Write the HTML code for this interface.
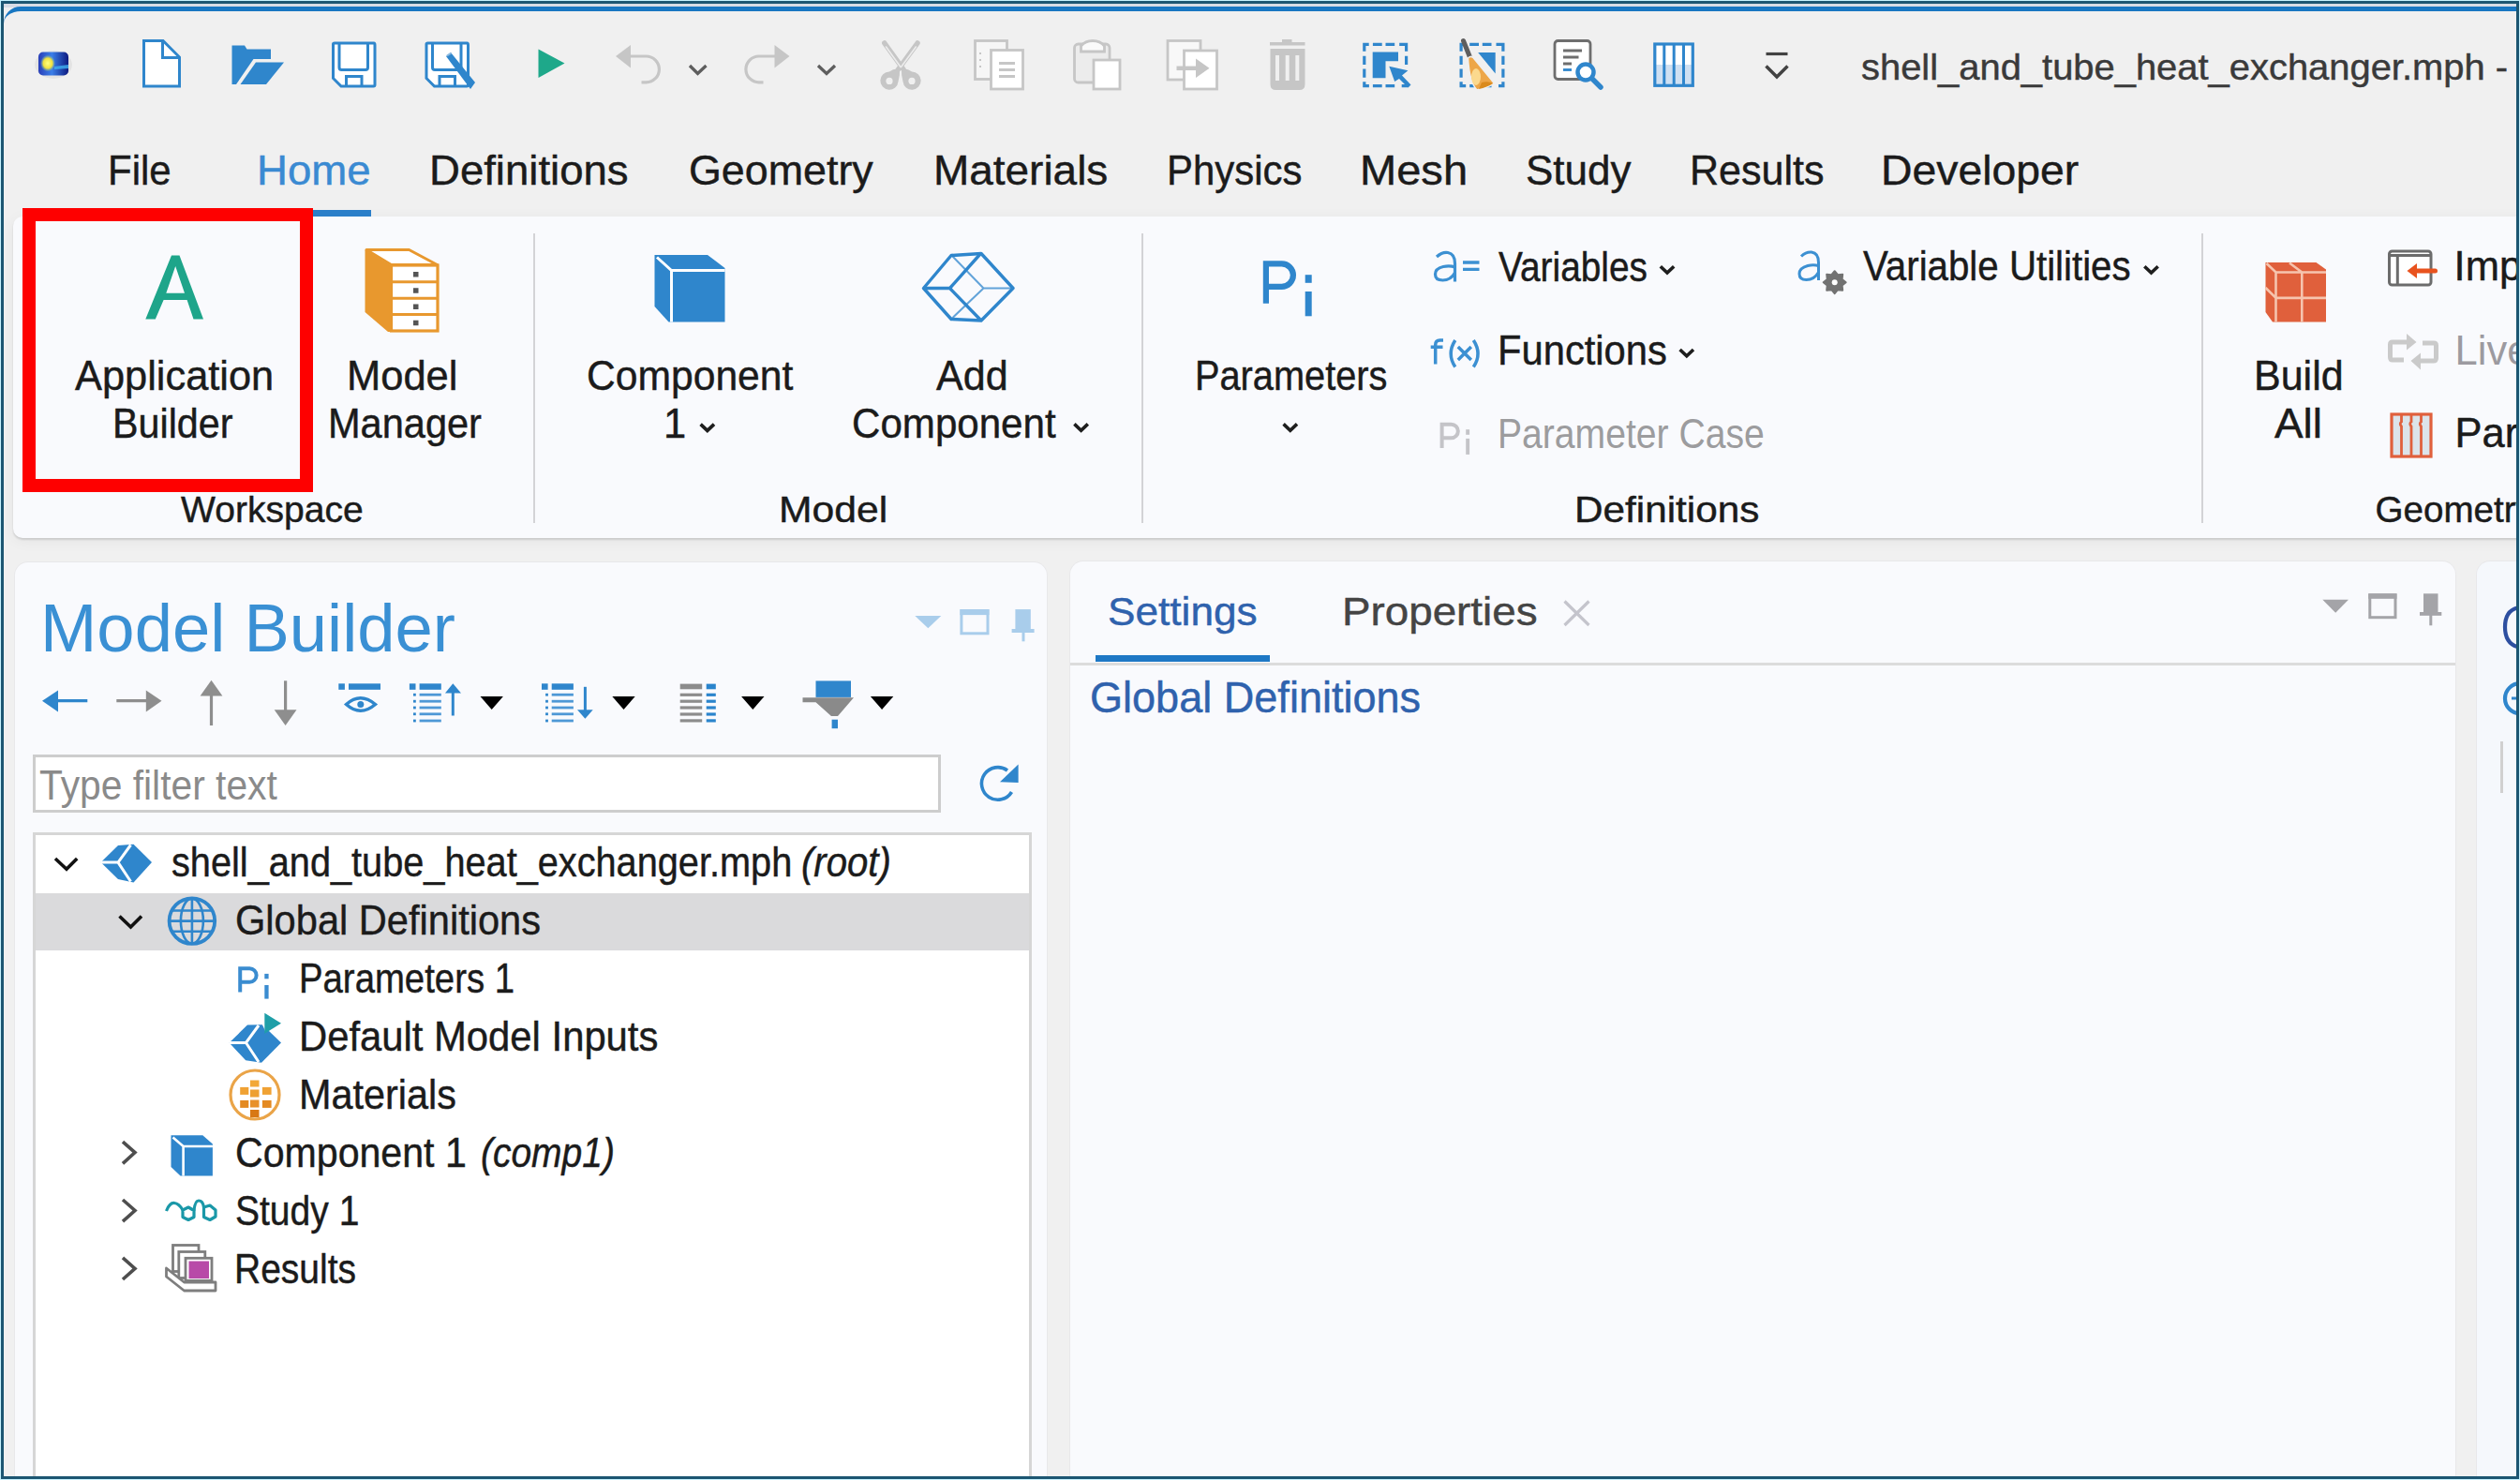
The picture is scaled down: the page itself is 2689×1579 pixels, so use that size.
<!DOCTYPE html>
<html><head><meta charset="utf-8"><title>COMSOL</title><style>
html,body{margin:0;padding:0}
body{width:2689px;height:1579px;position:relative;overflow:hidden;background:#c6f1fd;font-family:"Liberation Sans",sans-serif}
.t{position:absolute;white-space:pre;font-family:"Liberation Sans",sans-serif;-webkit-text-stroke:0.45px currentColor}
.a{position:absolute}
svg{position:absolute;overflow:visible}
</style></head><body>
<!-- window frame -->
<div class="a" style="left:1px;top:1px;width:2681px;height:1571px;border:3px solid #1c5672;background:#f0f0f0;border-radius:2px"></div>
<div class="a" style="left:4px;top:4px;width:2681px;height:4px;background:#d7dce5"></div>
<div class="a" style="left:4px;top:7px;width:2681px;height:20px;border-top:5px solid #1877c2;border-top-left-radius:18px;box-sizing:border-box"></div>
<!-- ribbon -->
<div class="a" style="left:13.5px;top:230.5px;width:2690px;height:343.5px;background:#f9fafd;border-radius:10px;box-shadow:0 2px 2px rgba(0,0,0,0.12),0 3px 16px rgba(0,0,0,0.05)"></div>
<!-- home underline -->
<div class="a" style="left:268px;top:224px;width:128px;height:7px;background:#2a7fc9"></div>
<!-- ribbon separators -->
<div class="a" style="left:568.5px;top:248.5px;width:2px;height:309px;background:#d3d3d6"></div>
<div class="a" style="left:1217.5px;top:248.5px;width:2px;height:309px;background:#d3d3d6"></div>
<div class="a" style="left:2348.5px;top:248.5px;width:2px;height:309px;background:#d3d3d6"></div>
<!-- panels -->
<div class="a" style="left:16px;top:599.5px;width:1101px;height:1100px;background:#f9fafd;border-radius:14px;box-shadow:0 0 0 1px #e8e8ea"></div>
<div class="a" style="left:1141.5px;top:599px;width:1478px;height:1100px;background:#f9fafd;border-radius:14px;box-shadow:0 0 0 1px #e8e8ea"></div>
<div class="a" style="left:2643px;top:599px;width:200px;height:1100px;background:#f5f8fc;border-radius:14px;box-shadow:0 0 0 1px #e8e8ea"></div>
<!-- filter box -->
<div class="a" style="left:35px;top:805px;width:962.5px;height:55.5px;border:3px solid #cdcdcd;background:#fff"></div>
<!-- tree box -->
<div class="a" style="left:35px;top:888px;width:1059.6px;height:800px;border:3px solid #d6d6d6;background:#fff"></div>
<div class="a" style="left:38px;top:952.5px;width:1059.6px;height:61px;background:#dadadc"></div>
<!-- settings tab strip -->
<div class="a" style="left:1141.5px;top:706.5px;width:1478px;height:3px;background:#dcdcdc"></div>
<div class="a" style="left:1169px;top:698.5px;width:186px;height:7px;background:#1e78c5"></div>
<!-- third panel divider -->
<div class="a" style="left:2668px;top:791px;width:3px;height:55px;background:#d0d0d0"></div>
<svg width="2689" height="1579" style="left:0;top:0"><defs>
<linearGradient id="lg1" x1="0" y1="0" x2="1" y2="0"><stop offset="0" stop-color="#2a3fb8"/><stop offset="0.45" stop-color="#3a7ee8"/><stop offset="1" stop-color="#0d1a80"/></linearGradient>
<radialGradient id="rg1" cx="0.5" cy="0.5" r="0.5"><stop offset="0" stop-color="#ffff80"/><stop offset="0.6" stop-color="#f0e040"/><stop offset="1" stop-color="#80c0a0" stop-opacity="0"/></radialGradient>
<linearGradient id="lg2" x1="0" y1="0" x2="0" y2="1"><stop offset="0" stop-color="#ffffff"/><stop offset="1" stop-color="#dceaf8"/></linearGradient>
</defs><ellipse cx="57" cy="69" rx="20" ry="15" fill="#000" opacity="0.05"/><rect x="41" y="55.5" width="32" height="25" rx="5" fill="url(#lg1)"/><ellipse cx="51" cy="67.5" rx="8" ry="9" fill="url(#rg1)"/><path d="M58,71 L73,69 L73,73 L58,74 Z" fill="#40b0f0" opacity="0.8"/><path d="M153.5,43.5 H174 L191.5,61 V92 H153.5 Z" fill="#fff" stroke="#2f86cc" stroke-width="3" stroke-linejoin="miter"/><path d="M173.5,43.5 V61.5 H191.5" fill="none" stroke="#2f86cc" stroke-width="3"/><path d="M247.5,48.5 H261 L263.5,52.5 H289 V63 H270.5 L252,90 H247.5 Z" fill="#2f86cc"/><path d="M273,66.5 H303 L284,90 H256.5 Z" fill="#2f86cc"/><path d="M355.5,47 Q355.5,46 357,46 H399 Q400,46 400,48 V90.5 Q400,92 398.5,92 H364 L355.5,83.5 Z" fill="#fff" stroke="#2f86cc" stroke-width="3"/><path d="M362,46 V72 Q362,74.5 364.5,74.5 H390 Q392.5,74.5 392.5,72 V46" fill="none" stroke="#2f86cc" stroke-width="3"/><path d="M369.5,92 V81.5 H386 V92" fill="none" stroke="#2f86cc" stroke-width="3"/><path d="M455.0,47 Q455.0,46 456.5,46 H498.5 Q499.5,46 499.5,48 V90.5 Q499.5,92 498.0,92 H463.5 L455.0,83.5 Z" fill="#fff" stroke="#2f86cc" stroke-width="3"/><path d="M461.5,46 V72 Q461.5,74.5 464.0,74.5 H489.5 Q492.0,74.5 492.0,72 V46" fill="none" stroke="#2f86cc" stroke-width="3"/><path d="M469.0,92 V81.5 H485.5 V92" fill="none" stroke="#2f86cc" stroke-width="3"/><path d="M476,60 L481,56 L507,88 L502,95 Z" fill="#2f86cc"/><path d="M477,59.5 L481.5,56.5" stroke="#8ab8e0" stroke-width="2"/><path d="M574.5,52.5 V83 L602.5,67.5 Z" fill="#1ea88a"/><path d="M657,60 L673,48 V72.5 Z" fill="#c6c6c6"/><path d="M672,60 H689.5 A13.9,13.9 0 0 1 689.5,87.8 H684.5" fill="none" stroke="#c6c6c6" stroke-width="3.2"/><path d="M736,70 L744.5,78.5 L753.5,70" fill="none" stroke="#5e5e5e" stroke-width="3.3"/><path d="M842.5,60 L826.5,48 V72.5 Z" fill="#c6c6c6"/><path d="M827,60 H809.8 A13.9,13.9 0 0 0 809.8,87.8 H814.5" fill="none" stroke="#c6c6c6" stroke-width="3.2"/><path d="M873,70 L882,78.5 L891,70" fill="none" stroke="#5e5e5e" stroke-width="3.3"/><g stroke-linecap="round" fill="none"><path d="M943.8,46 L964,74 M979,46 L958.5,74" stroke="#c6c6c6" stroke-width="5.5"/><path d="M945.5,50 L961,71.5 M977.3,50 L961.5,71.5" stroke="#ececec" stroke-width="1.6"/></g><path d="M948.9,76.5 Q955,72 960,74 Q960.5,80 958.5,87 A9.6,9.6 0 1 1 948.9,76.5 Z M973.1,76.5 Q967,72 962,74 Q961.5,80 963.5,87 A9.6,9.6 0 1 0 973.1,76.5 Z" fill="#c6c6c6"/><circle cx="949" cy="86.4" r="3.6" fill="#f0f0f0"/><circle cx="973" cy="86.4" r="3.6" fill="#f0f0f0"/><rect x="1040.5" y="43.5" width="34" height="41" fill="#f6f6f6" stroke="#c6c6c6" stroke-width="2.8"/><path d="M1045,57 h2 M1045,64 h2 M1045,71 h2" stroke="#c6c6c6" stroke-width="2"/><rect x="1057.5" y="53.5" width="34" height="41.5" fill="#fff" stroke="#c6c6c6" stroke-width="2.8"/><path d="M1066,67.5 H1083 M1066,74.5 H1083 M1066,81.5 H1083" stroke="#c6c6c6" stroke-width="2.8"/><rect x="1146.5" y="47" width="37.5" height="41" rx="4" fill="#ececec" stroke="#c6c6c6" stroke-width="2.8"/><path d="M1153.5,55 V49 Q1158,43.5 1166,43.5 Q1174,43.5 1178.5,49 V55 Z" fill="#fafafa" stroke="#c6c6c6" stroke-width="2.8"/><rect x="1167" y="64" width="28" height="31" fill="#fff" stroke="#c6c6c6" stroke-width="2.8"/><rect x="1246" y="43.5" width="35" height="41.5" fill="#f8f8f8" stroke="#c6c6c6" stroke-width="2.8"/><rect x="1263.5" y="54" width="35" height="41" fill="#fff" stroke="#c6c6c6" stroke-width="2.8"/><path d="M1255.5,72.8 H1278" stroke="#c6c6c6" stroke-width="4.5"/><path d="M1276,62.5 L1290.5,72.8 L1276,83 Z" fill="#c6c6c6"/><path d="M1355,45 H1392.5 V48.5 H1355 Z M1368,42 H1378.5 V45.5 H1368 Z" fill="#c6c6c6"/><path d="M1355.5,52 H1392.5 V90 Q1392.5,96 1386.5,96 H1361.5 Q1355.5,96 1355.5,90 Z" fill="#c6c6c6"/><path d="M1361,59 h4 v27 h-4 Z M1371.7,59 h4 v27 h-4 Z M1382.3,59 h4 v27 h-4 Z" fill="#f0f0f0"/><path d="M1455.8,54.75 V47.35 H1460.7 M1493.2,47.35 H1500.6000000000001 V54.75 M1455.8,87.25 V91.65 H1460.9 M1495.7,91.65 H1500.6000000000001 V87.25 M1464.9,47.35 H1474.7 M1464.9,91.65 H1474.7 M1478.5,47.35 H1488.2 M1478.5,91.65 H1488.2 M1455.8,59.75 V68.95 M1500.6000000000001,59.75 V68.95 M1455.8,73.55 V82.75" fill="none" stroke="#2f86cc" stroke-width="3.2"/><path d="M1464.7,55.4 H1492 V65.2 H1478.5 V83.2 H1464.7 Z" fill="#2f86cc"/><path d="M1482.3,70.7 L1502.4,75.3 L1496,80.5 L1505.5,90.5 L1502.5,93.5 L1493,84 L1488.2,87 Z" fill="#2f86cc" stroke="#f0f0f0" stroke-width="0"/><path d="M1559.1,54.75 V47.35 H1564.0 M1596.5,47.35 H1603.9 V54.75 M1559.1,87.25 V91.65 H1564.2 M1599.0,91.65 H1603.9 V87.25 M1568.2,47.35 H1578.0 M1568.2,91.65 H1578.0 M1581.8,47.35 H1591.5 M1581.8,91.65 H1591.5 M1559.1,59.75 V68.95 M1603.9,59.75 V68.95 M1559.1,73.55 V82.75 M1603.9,73.55 V82.75" fill="none" stroke="#2f86cc" stroke-width="3.2"/><path d="M1577.2,56 H1595.7 V78.6 Z" fill="#2f86cc"/><path d="M1561.5,43.5 L1568.5,61" stroke="#5e5e5e" stroke-width="5" stroke-linecap="round"/><path d="M1566.5,62 Q1569,59 1572,61.5 L1594.5,89 Q1586,94 1576,96 Q1568,88 1566.5,62 Z" fill="#eda648" stroke="#f0f0f0" stroke-width="1.5"/><ellipse cx="1575" cy="82" rx="5" ry="9" fill="#fbd98e"/><path d="M1581,88 Q1588,86 1593,89 Q1587,93 1578,95 Z" fill="#da8a1c"/><rect x="1659" y="43.5" width="38" height="41" rx="3.5" fill="#fff" stroke="#6e6e6e" stroke-width="2.8"/><path d="M1668,54 H1688 M1668,61 H1684.5 M1668,68 H1677" stroke="#6e6e6e" stroke-width="2.8"/><path d="M1668,74.5 H1677" stroke="#2f86cc" stroke-width="2.8"/><circle cx="1692" cy="77" r="8.5" fill="#fff" stroke="#2f86cc" stroke-width="4.5"/><path d="M1699,84 L1708,93" stroke="#2f86cc" stroke-width="5.5" stroke-linecap="round"/><rect x="1766" y="47" width="40.5" height="44" fill="#fff"/><rect x="1766" y="69" width="40.5" height="22" fill="#cfe0f2"/><rect x="1765.8" y="47" width="40.5" height="44.3" fill="none" stroke="#2f86cc" stroke-width="3.2"/><path d="M1775.8,47 V91 M1786.2,47 V91 M1796.5,47 V91" stroke="#2f86cc" stroke-width="3"/><path d="M1884.5,57.5 H1907.5" stroke="#424242" stroke-width="3.2"/><path d="M1884.5,70.5 L1896,82 L1907.5,70.5" fill="none" stroke="#424242" stroke-width="3.5"/><path fill-rule="evenodd" fill="#1ea58a" d="M183,272.5 H191.5 L217,340.5 H206.5 L199.6,320 H174.6 L165.8,340.5 H155.3 Z M187.2,284 L177.3,312.7 H197 Z"/><path d="M389.5,266.5 L417.5,283.5 V354 H414 L389.5,333 Z" fill="#e8982e"/><path d="M391,266.5 H436.5 L466.5,282.5 H417.5 Z" fill="#fff" stroke="#e8982e" stroke-width="3" stroke-linejoin="round"/><rect x="417.5" y="283" width="49.5" height="70" fill="#fff" stroke="#e8982e" stroke-width="3.2"/><path d="M417.5,300.8 H467 M417.5,318.2 H467 M417.5,335.6 H467" stroke="#e8982e" stroke-width="3"/><path d="M441,290 h5.5 v5.5 h-5.5 Z M441,307.3 h5.5 v5.5 h-5.5 Z M441,324.6 h5.5 v5.5 h-5.5 Z M441,341.8 h5.5 v5.5 h-5.5 Z" fill="#555"/><path d="M698.5,272 H755 L773.5,286 V343.5 H713.5 L698.5,327 Z" fill="#2f86cc"/><path d="M701,274.5 L716.5,288.5 H773.5 M716.5,288.5 V343.5" fill="none" stroke="#fff" stroke-width="3"/><g fill="none" stroke="#2f86cc" stroke-linejoin="round"><path d="M985.5,307.5 L1015,272.5 L1047,270.5 L1081,307.5 L1047,342 L1015,340.5 Z" stroke-width="3.4"/><path d="M985.5,307.5 H1013.5 L1046,271 M1013.5,307.5 L1046,341" stroke-width="3.4"/><path d="M1016,273 L1049.5,307.5 H1080 M1049.5,307.5 L1016,339.5" stroke-width="2" stroke-opacity="0.75"/></g><g fill="none" stroke="#2f86cc" stroke-width="6.2"><path d="M1350.9,323.8 V281.40000000000003 H1367.7 A12.2,12.2 0 0 1 1367.7,305.8 H1350.9"/></g><rect x="1392.7" y="293.2" width="7" height="8.6" fill="#2f86cc"/><rect x="1392.7" y="311" width="7" height="26.3" fill="#2f86cc"/><g fill="none" stroke="#3c90d2" stroke-width="3.2"><path d="M1533,274 Q1539,268.5 1545,269.5 Q1552.5,271 1552.5,281 V300.5"/><path d="M1552.5,285 Q1547,283 1540,284.5 Q1531.5,286.5 1531.5,292.5 Q1531.5,299 1539.5,299 Q1548,299 1552.5,291"/></g><path d="M1561,280 H1578.5 M1561,287.3 H1578.5" stroke="#3c90d2" stroke-width="3.3"/><g fill="none" stroke="#3c90d2" stroke-width="3.5"><path d="M1531.7,388.5 V368 Q1531.7,363 1536.5,363 H1540 M1526.7,370.2 H1539.5"/><path d="M1552.8,363 Q1543.5,377.5 1552.8,391.5"/><path d="M1555.8,370 L1569.8,384 M1569.8,370 L1555.8,384"/><path d="M1572.3,363 Q1581.8,377.5 1572.3,391.5"/></g><g fill="none" stroke="#c4c4c8" stroke-width="4.0"><path d="M1538.604,477.97499999999997 V452.747 H1548.6000000000001 A7.2589999999999995,7.2589999999999995 0 0 1 1548.6000000000001,467.265 H1538.604"/></g><rect x="1564.2" y="458.2" width="3.9" height="5.6" fill="#c4c4c8"/><rect x="1564.2" y="467.9" width="3.9" height="17" fill="#c4c4c8"/><g fill="none" stroke="#3c90d2" stroke-width="3"><path d="M1922,273.5 Q1927,268.5 1933,269 Q1940.5,270 1940.5,280 V299"/><path d="M1940.5,283.5 Q1935,282 1929,283.5 Q1920,286 1920,292 Q1920,298.5 1927.5,298.5 Q1936,298.5 1940.5,290.5"/></g><path d="M1957.70,289.20 L1960.99,293.25 L1966.19,292.71 L1965.65,297.91 L1969.70,301.20 L1965.65,304.49 L1966.19,309.69 L1960.99,309.15 L1957.70,313.20 L1954.41,309.15 L1949.21,309.69 L1949.75,304.49 L1945.70,301.20 L1949.75,297.91 L1949.21,292.71 L1954.41,293.25 Z" fill="#727272" stroke="#727272" stroke-width="2" stroke-linejoin="round"/><circle cx="1957.7" cy="301.2" r="3" fill="#fff"/><path d="M2417.5,280 H2471.5 L2482,287.5 V343.5 H2425 L2417.5,333 Z" fill="#e0603c"/><path d="M2418.5,281 L2428.5,290.5 H2482 M2428.5,290.5 V343.5 M2456.3,290.5 V343.5 M2428.5,317.9 H2482 M2417.5,307 L2428.5,317.9 M2443,280.5 L2456.3,290.5" fill="none" stroke="#f6c4ae" stroke-width="2.6"/><rect x="2549.5" y="268" width="44.5" height="36" rx="3" fill="#fff" stroke="#6c6c6c" stroke-width="3"/><path d="M2549.5,272.5 H2594" stroke="#6c6c6c" stroke-width="3"/><path d="M2558.3,272 V304" stroke="#6c6c6c" stroke-width="3"/><path d="M2576,289 H2598.5" stroke="#e8521e" stroke-width="5" stroke-linecap="round"/><path d="M2568.5,289 L2579,281 V297 Z" fill="#e8521e"/><g fill="none" stroke="#cacaca" stroke-width="5"><path d="M2571,365 H2553 Q2550.5,365 2550.5,367.5 V381 Q2550.5,384 2553,384 H2565"/><path d="M2578,385 H2596.5 Q2599.5,385 2599.5,382 V368.5 Q2599.5,366 2597,366 H2585"/></g><path d="M2568,356 L2578.5,365 L2568,373.5 Z M2583,376.5 L2572.5,385 L2583,394.5 Z" fill="#cacaca"/><rect x="2552" y="442" width="42" height="45" fill="#dce4ea" stroke="#e0603c" stroke-width="3.2"/><g fill="none" stroke="#e0603c" stroke-width="2.8"><path d="M2562.5,442 V450 Q2560,452 2562.5,455 V487"/><path d="M2573,442 V450 Q2570.5,452 2573,455 V487"/><path d="M2583.5,442 V450 Q2581,452 2583.5,455 V487"/></g><path d="M747.5999999999999,452.6 L754.8,459.40000000000003 L762.0,452.6" fill="none" stroke="#1e1e1e" stroke-width="3.6"/><path d="M1146.3999999999999,452.4 L1153.6,459.2 L1160.8,452.4" fill="none" stroke="#1e1e1e" stroke-width="3.6"/><path d="M1369.6,452.4 L1376.8,459.2 L1384.0,452.4" fill="none" stroke="#1e1e1e" stroke-width="3.6"/><path d="M1771.8,284.3 L1779,291.1 L1786.2,284.3" fill="none" stroke="#1e1e1e" stroke-width="3.6"/><path d="M1792.6,373 L1799.8,379.8 L1807.0,373" fill="none" stroke="#1e1e1e" stroke-width="3.6"/><path d="M2288.3,284.3 L2295.5,291.1 L2302.7,284.3" fill="none" stroke="#1e1e1e" stroke-width="3.6"/><path d="M45,747.7 L62,736.4 V759.4 Z" fill="#2f86cc"/><path d="M60,747.7 H93.3" stroke="#2f86cc" stroke-width="3.2"/><path d="M172.5,747.7 L155.8,736.4 V759.4 Z" fill="#8e8e8e"/><path d="M124.3,747.7 H158" stroke="#8e8e8e" stroke-width="3.2"/><path d="M225.5,725.7 L213.6,742.4 H237.4 Z" fill="#8e8e8e"/><path d="M225.5,740 V774" stroke="#8e8e8e" stroke-width="3.2"/><path d="M304.6,773.9 L292.7,757.3 H316.5 Z" fill="#8e8e8e"/><path d="M304.6,726.3 V760" stroke="#8e8e8e" stroke-width="3.2"/><rect x="361.3" y="729.3" width="6.6" height="6.5" fill="#2f86cc"/><rect x="372" y="729.3" width="34" height="6.5" fill="#2f86cc"/><path d="M369.5,751.5 Q384.5,738 400.5,751.5 Q384.5,765 369.5,751.5 Z" fill="none" stroke="#2f86cc" stroke-width="3.4"/><circle cx="384.8" cy="751.5" r="3.5" fill="#2f86cc"/><rect x="436.9" y="729.3" width="6.6" height="6.5" fill="#2f86cc"/><rect x="447.59999999999997" y="729.3" width="23.2" height="6.5" fill="#2f86cc"/><rect x="441.0" y="739.8000000000001" width="2.8" height="2.8" fill="#2f86cc"/><rect x="447.59999999999997" y="739.8000000000001" width="23.2" height="2.8" fill="#4e98d6"/><rect x="441.0" y="746.8000000000001" width="2.8" height="2.8" fill="#2f86cc"/><rect x="447.59999999999997" y="746.8000000000001" width="23.2" height="2.8" fill="#4e98d6"/><rect x="441.0" y="753.6" width="2.8" height="2.8" fill="#2f86cc"/><rect x="447.59999999999997" y="753.6" width="23.2" height="2.8" fill="#4e98d6"/><rect x="441.0" y="760.4" width="2.8" height="2.8" fill="#2f86cc"/><rect x="447.59999999999997" y="760.4" width="23.2" height="2.8" fill="#4e98d6"/><rect x="441.0" y="767.6" width="2.8" height="2.8" fill="#2f86cc"/><rect x="447.59999999999997" y="767.6" width="23.2" height="2.8" fill="#4e98d6"/><path d="M483.3,729.3 L475,739.6 H492 Z" fill="#2f86cc"/><path d="M483.3,737 V763.5" stroke="#2f86cc" stroke-width="3"/><rect x="578" y="729.3" width="6.6" height="6.5" fill="#2f86cc"/><rect x="588.7" y="729.3" width="23.2" height="6.5" fill="#2f86cc"/><rect x="582.1" y="739.8000000000001" width="2.8" height="2.8" fill="#2f86cc"/><rect x="588.7" y="739.8000000000001" width="23.2" height="2.8" fill="#4e98d6"/><rect x="582.1" y="746.8000000000001" width="2.8" height="2.8" fill="#2f86cc"/><rect x="588.7" y="746.8000000000001" width="23.2" height="2.8" fill="#4e98d6"/><rect x="582.1" y="753.6" width="2.8" height="2.8" fill="#2f86cc"/><rect x="588.7" y="753.6" width="23.2" height="2.8" fill="#4e98d6"/><rect x="582.1" y="760.4" width="2.8" height="2.8" fill="#2f86cc"/><rect x="588.7" y="760.4" width="23.2" height="2.8" fill="#4e98d6"/><rect x="582.1" y="767.6" width="2.8" height="2.8" fill="#2f86cc"/><rect x="588.7" y="767.6" width="23.2" height="2.8" fill="#4e98d6"/><path d="M624.4,766.8 L616,757.3 H632.7 Z" fill="#2f86cc"/><path d="M624.4,732.8 V759" stroke="#2f86cc" stroke-width="3"/><rect x="725.7" y="729.6" width="23.5" height="5.7" fill="#8c8c8c"/><rect x="753.7" y="729.6" width="10.1" height="5.7" fill="#2a84cc"/><rect x="725.7" y="739.6999999999999" width="23.5" height="3.2" fill="#8c8c8c"/><rect x="753.7" y="739.6999999999999" width="10.1" height="3.2" fill="#2a84cc"/><rect x="725.7" y="746.6" width="23.5" height="3.2" fill="#8c8c8c"/><rect x="753.7" y="746.6" width="10.1" height="3.2" fill="#2a84cc"/><rect x="725.7" y="753.4" width="23.5" height="3.2" fill="#8c8c8c"/><rect x="753.7" y="753.4" width="10.1" height="3.2" fill="#2a84cc"/><rect x="725.7" y="760.4" width="23.5" height="3.2" fill="#8c8c8c"/><rect x="753.7" y="760.4" width="10.1" height="3.2" fill="#2a84cc"/><rect x="725.7" y="767.3" width="23.5" height="3.2" fill="#8c8c8c"/><rect x="753.7" y="767.3" width="10.1" height="3.2" fill="#2a84cc"/><rect x="870.5" y="726.4" width="37.5" height="17.5" fill="#2f86cc"/><path d="M856.5,744.2 H911 L894,764 H887 L870.5,749.3 H856.5 Z" fill="#8a8a8a"/><rect x="887.6" y="767.7" width="6.4" height="9.5" fill="#2f86cc"/><path d="M512.5,743 H536.9 L524.7,756.9 Z" fill="#000"/><path d="M653.3,743 H677.6999999999999 L665.5,756.9 Z" fill="#000"/><path d="M791.1,743 H815.5 L803.3000000000001,756.9 Z" fill="#000"/><path d="M928.9,743 H953.3 L941.1,756.9 Z" fill="#000"/><path d="M976.3,657.1 H1004.3 L990.3,670.3 Z" fill="#a9cdeb"/><rect x="1025.9" y="651.6" width="28.1" height="24.2" fill="none" stroke="#a9cdeb" stroke-width="3"/><rect x="1024.4" y="650.1" width="31.1" height="6" fill="#a9cdeb"/><rect x="1083.4" y="650.1" width="16.4" height="21.7" fill="#a9cdeb"/><rect x="1079.6" y="671" width="24" height="4" fill="#a9cdeb"/><rect x="1090.5" y="674" width="3" height="10.3" fill="#a9cdeb"/><path d="M1079.5,845 A17.3,17.3 0 1 1 1075,822" fill="none" stroke="#2f86cc" stroke-width="3.6"/><path d="M1067,834.2 L1086.6,815.5 V834.9 Z" fill="#2f86cc"/><path d="M59,916 L71,927.2 L82.2,916" fill="none" stroke="#111" stroke-width="3.6"/><path d="M127.5,977.5 L139.5,989 L151,977.5" fill="none" stroke="#111" stroke-width="3.6"/><path d="M131,1218.1 L144,1229.6 L131,1241.3" fill="none" stroke="#4e4e4e" stroke-width="3.6"/><path d="M131,1280 L144,1291.5 L131,1303.1" fill="none" stroke="#4e4e4e" stroke-width="3.6"/><path d="M131,1341.9 L144,1353.4 L131,1365" fill="none" stroke="#4e4e4e" stroke-width="3.6"/><path d="M107.6,920.1 L126,902 L142.5,900.7 L162,920.1 L142.5,941.6 L126,938 Z" fill="#2f86cc"/><path d="M107.6,920.1 H126 L139.5,901.5 M126,920.1 L139.5,940.5" fill="none" stroke="#fff" stroke-width="3"/><g fill="none" stroke="#2f86cc" stroke-width="2.6"><circle cx="204.9" cy="982.6" r="24.3" stroke-width="3.8"/><ellipse cx="204.9" cy="982.6" rx="12" ry="24"/><path d="M204.9,958.4 V1006.8 M180.7,982.6 H229.1 M183.5,971.5 H226.3 M183.5,993.7 H226.3"/></g><g fill="none" stroke="#3a8cd0" stroke-width="4.0"><path d="M256.22,1058.6 V1033.1599999999999 H266.3 A7.319999999999999,7.319999999999999 0 0 1 266.3,1047.8 H256.22"/></g><rect x="282.3" y="1038.9" width="4.3" height="5.4" fill="#3a8cd0"/><rect x="282.3" y="1051" width="4.3" height="14.6" fill="#3a8cd0"/><path d="M244.6,1112.5 L264,1093.6 L280,1093.2 L300,1112.5 L279,1133.7 L262.2,1131.3 Z" fill="#2f86cc"/><path d="M244.6,1112.5 H262.5 L276,1094 M262.5,1112.5 L276,1133" fill="none" stroke="#fff" stroke-width="3"/><path d="M279,1091 L283,1100 L292,1093 Z" fill="#fff"/><path d="M282.3,1080.8 V1102.7 L300,1091.8 Z" fill="#1f9fa8"/><circle cx="272" cy="1168" r="26" fill="none" stroke="#eaa448" stroke-width="3.2"/><rect x="256.2" y="1159.9" width="9.100000000000023" height="8" fill="#f0a234"/><rect x="256.2" y="1173.9" width="9.100000000000023" height="8" fill="#e48a22"/><rect x="279.9" y="1159.9" width="9.700000000000045" height="8" fill="#f0a234"/><rect x="279.9" y="1173.9" width="9.700000000000045" height="8" fill="#e48a22"/><rect x="267" y="1152.5" width="9.5" height="7" fill="#f2a838"/><rect x="267" y="1162.5" width="9.5" height="8" fill="#eea032"/><rect x="267" y="1173.5" width="9.5" height="8" fill="#e89028"/><rect x="267" y="1184" width="9.5" height="8" fill="#d87814"/><path d="M182.5,1211.3 H216.3 L226.9,1220.6 V1254.4 H192.5 L182.5,1245 Z" fill="#2f86cc"/><path d="M184.5,1213.5 L195.6,1223 H226.9 M195.6,1223 V1254.4" fill="none" stroke="#fff" stroke-width="2.6"/><g fill="none" stroke="#1a98a8" stroke-width="3.2" stroke-linejoin="round"><path d="M177.5,1292 Q181,1283 186,1283.5 Q191,1284 195,1291"/><path d="M195,1291 L201,1288 L207,1291.5 V1298.5 L201,1301.5 L195,1298.5 Z"/><path d="M207,1291.5 Q208,1281 212,1281 Q216.5,1281 217.5,1288"/><path d="M217.5,1288 L224,1286 L230,1291 V1298 L224,1301.5 L217.5,1298.5 Z"/></g><g fill="#fff" stroke="#7e7e7e" stroke-width="2.8"><rect x="184.5" y="1328.5" width="27.5" height="28"/><rect x="190.8" y="1335.5" width="28" height="28"/><rect x="198" y="1342.3" width="28" height="24"/></g><rect x="201.5" y="1345.5" width="21.5" height="18.5" fill="#b84aa8"/><path d="M177.5,1353 L196.5,1368 H230 V1377 H196.5 L177.5,1362 Z" fill="#fff" stroke="#7e7e7e" stroke-width="2.8" stroke-linejoin="round"/><path d="M1669.5,641.5 L1695.5,667 M1695.5,641.5 L1669.5,667" stroke="#c4c4cc" stroke-width="3.2"/><path d="M2478.3,639.7 H2506 L2492.2,653.8 Z" fill="#a4a4a8"/><rect x="2528.8" y="634.8" width="27.2" height="23.9" fill="none" stroke="#a4a4a8" stroke-width="3"/><rect x="2527.3" y="633.3" width="30.2" height="5.5" fill="#a4a4a8"/><rect x="2586" y="633.3" width="15.5" height="21" fill="#a4a4a8"/><rect x="2582" y="653" width="23.3" height="3.8" fill="#a4a4a8"/><rect x="2592.3" y="656" width="3" height="11.3" fill="#a4a4a8"/><path d="M2686,648.5 Q2673,652 2673,669 Q2673,686 2686,690" fill="none" stroke="#2d4fa0" stroke-width="4.2"/><circle cx="2689" cy="745.2" r="16" fill="none" stroke="#2f86cc" stroke-width="4.2"/><path d="M2680,745 H2686" stroke="#2f86cc" stroke-width="3"/></svg>
<div class="t" style="left:1986.49px;top:52.00px;font-size:39.5px;line-height:39.5px;color:#3a3a3a;transform:scaleX(1.0103);transform-origin:0 0;">shell_and_tube_heat_exchanger.mph -</div>
<div class="t" style="left:115.18px;top:159.50px;font-size:44px;line-height:44px;color:#1b1b1b;transform:scaleX(0.9538);transform-origin:0 0;">File</div>
<div class="t" style="left:273.86px;top:159.50px;font-size:44px;line-height:44px;color:#3a8ad2;transform:scaleX(1.0357);transform-origin:0 0;">Home</div>
<div class="t" style="left:457.86px;top:159.50px;font-size:44px;line-height:44px;color:#1b1b1b;transform:scaleX(1.0350);transform-origin:0 0;">Definitions</div>
<div class="t" style="left:735.46px;top:159.50px;font-size:44px;line-height:44px;color:#1b1b1b;transform:scaleX(1.0183);transform-origin:0 0;">Geometry</div>
<div class="t" style="left:995.72px;top:159.50px;font-size:44px;line-height:44px;color:#1b1b1b;transform:scaleX(1.0439);transform-origin:0 0;">Materials</div>
<div class="t" style="left:1245.19px;top:159.50px;font-size:44px;line-height:44px;color:#1b1b1b;transform:scaleX(0.9521);transform-origin:0 0;">Physics</div>
<div class="t" style="left:1450.72px;top:159.50px;font-size:44px;line-height:44px;color:#1b1b1b;transform:scaleX(1.0693);transform-origin:0 0;">Mesh</div>
<div class="t" style="left:1628.00px;top:159.50px;font-size:44px;line-height:44px;color:#1b1b1b;">Study</div>
<div class="t" style="left:1803.09px;top:159.50px;font-size:44px;line-height:44px;color:#1b1b1b;transform:scaleX(0.9787);transform-origin:0 0;">Results</div>
<div class="t" style="left:2006.79px;top:159.50px;font-size:44px;line-height:44px;color:#1b1b1b;transform:scaleX(1.0536);transform-origin:0 0;">Developer</div>
<div class="t" style="left:80.00px;top:380.00px;font-size:43.5px;line-height:43.5px;color:#1b1b1b;transform:scaleX(0.9971);transform-origin:0 0;">Application</div>
<div class="t" style="left:119.95px;top:431.30px;font-size:43.5px;line-height:43.5px;color:#1b1b1b;transform:scaleX(0.9485);transform-origin:0 0;">Builder</div>
<div class="t" style="left:370.00px;top:380.00px;font-size:43.5px;line-height:43.5px;color:#1b1b1b;">Model</div>
<div class="t" style="left:349.74px;top:431.30px;font-size:43.5px;line-height:43.5px;color:#1b1b1b;transform:scaleX(0.9548);transform-origin:0 0;">Manager</div>
<div class="t" style="left:625.54px;top:380.00px;font-size:43.5px;line-height:43.5px;color:#1b1b1b;transform:scaleX(0.9798);transform-origin:0 0;">Component</div>
<div class="t" style="left:708.00px;top:431.30px;font-size:43.5px;line-height:43.5px;color:#1b1b1b;">1</div>
<div class="t" style="left:998.50px;top:380.00px;font-size:43.5px;line-height:43.5px;color:#1b1b1b;transform:scaleX(0.9893);transform-origin:0 0;">Add</div>
<div class="t" style="left:908.86px;top:431.30px;font-size:43.5px;line-height:43.5px;color:#1b1b1b;transform:scaleX(0.9677);transform-origin:0 0;">Component</div>
<div class="t" style="left:1275.26px;top:380.00px;font-size:43.5px;line-height:43.5px;color:#1b1b1b;transform:scaleX(0.9136);transform-origin:0 0;">Parameters</div>
<div class="t" style="left:1599.00px;top:263.60px;font-size:43.5px;line-height:43.5px;color:#1b1b1b;transform:scaleX(0.8927);transform-origin:0 0;">Variables</div>
<div class="t" style="left:1597.62px;top:352.70px;font-size:43.5px;line-height:43.5px;color:#1b1b1b;transform:scaleX(0.9592);transform-origin:0 0;">Functions</div>
<div class="t" style="left:1597.80px;top:441.70px;font-size:43.5px;line-height:43.5px;color:#9c9c9e;transform:scaleX(0.8990);transform-origin:0 0;-webkit-text-stroke:0;">Parameter Case</div>
<div class="t" style="left:1987.50px;top:263.00px;font-size:43.5px;line-height:43.5px;color:#1b1b1b;transform:scaleX(0.9254);transform-origin:0 0;">Variable Utilities</div>
<div class="t" style="left:2405.03px;top:380.00px;font-size:43.5px;line-height:43.5px;color:#1b1b1b;transform:scaleX(0.9890);transform-origin:0 0;">Build</div>
<div class="t" style="left:2427.00px;top:431.30px;font-size:43.5px;line-height:43.5px;color:#1b1b1b;transform:scaleX(1.0543);transform-origin:0 0;">All</div>
<div class="t" style="left:2618.60px;top:263.40px;font-size:43.5px;line-height:43.5px;color:#1b1b1b;">Imp</div>
<div class="t" style="left:2619.60px;top:352.60px;font-size:43.5px;line-height:43.5px;color:#9c9aa0;-webkit-text-stroke:0;">Live</div>
<div class="t" style="left:2619.60px;top:441.30px;font-size:43.5px;line-height:43.5px;color:#1b1b1b;">Part</div>
<div class="t" style="left:193.10px;top:525.20px;font-size:38.6px;line-height:38.6px;color:#1b1b1b;transform:scaleX(1.0131);transform-origin:0 0;">Workspace</div>
<div class="t" style="left:830.68px;top:525.00px;font-size:38.6px;line-height:38.6px;color:#1b1b1b;transform:scaleX(1.1050);transform-origin:0 0;">Model</div>
<div class="t" style="left:1679.51px;top:524.80px;font-size:38.6px;line-height:38.6px;color:#1b1b1b;transform:scaleX(1.0960);transform-origin:0 0;">Definitions</div>
<div class="t" style="left:2534.50px;top:524.50px;font-size:38.6px;line-height:38.6px;color:#1b1b1b;">Geometry</div>
<div class="t" style="left:42.85px;top:632.70px;font-size:73px;line-height:73px;color:#3a90d4;transform:scaleX(0.9925);transform-origin:0 0;-webkit-text-stroke:0;">Model Builder</div>
<div class="t" style="left:42.07px;top:816.00px;font-size:44px;line-height:44px;color:#8a8a8a;transform:scaleX(0.9267);transform-origin:0 0;-webkit-text-stroke:0;">Type filter text</div>
<div class="t" style="left:183.40px;top:898.20px;font-size:44px;line-height:44px;color:#1b1b1b;transform:scaleX(0.9023);transform-origin:0 0;">shell_and_tube_heat_exchanger.mph</div>
<div class="t" style="left:855.48px;top:898.20px;font-size:44px;line-height:44px;color:#1b1b1b;transform:scaleX(0.9119);transform-origin:0 0;font-style:italic;">(root)</div>
<div class="t" style="left:250.71px;top:960.20px;font-size:44px;line-height:44px;color:#1b1b1b;transform:scaleX(0.9455);transform-origin:0 0;">Global Definitions</div>
<div class="t" style="left:319.42px;top:1022.20px;font-size:44px;line-height:44px;color:#1b1b1b;transform:scaleX(0.8709);transform-origin:0 0;">Parameters 1</div>
<div class="t" style="left:319.10px;top:1084.20px;font-size:44px;line-height:44px;color:#1b1b1b;transform:scaleX(0.9500);transform-origin:0 0;">Default Model Inputs</div>
<div class="t" style="left:318.94px;top:1146.20px;font-size:44px;line-height:44px;color:#1b1b1b;transform:scaleX(0.9405);transform-origin:0 0;">Materials</div>
<div class="t" style="left:251.43px;top:1208.20px;font-size:44px;line-height:44px;color:#1b1b1b;transform:scaleX(0.9342);transform-origin:0 0;">Component 1</div>
<div class="t" style="left:512.53px;top:1208.20px;font-size:44px;line-height:44px;color:#1b1b1b;transform:scaleX(0.8854);transform-origin:0 0;font-style:italic;">(comp1)</div>
<div class="t" style="left:250.63px;top:1270.20px;font-size:44px;line-height:44px;color:#1b1b1b;transform:scaleX(0.8869);transform-origin:0 0;">Study 1</div>
<div class="t" style="left:250.05px;top:1332.20px;font-size:44px;line-height:44px;color:#1b1b1b;transform:scaleX(0.8865);transform-origin:0 0;">Results</div>
<div class="t" style="left:1182.24px;top:631.00px;font-size:43px;line-height:43px;color:#2f62ad;transform:scaleX(1.0276);transform-origin:0 0;">Settings</div>
<div class="t" style="left:1431.51px;top:630.80px;font-size:43px;line-height:43px;color:#444444;transform:scaleX(1.0641);transform-origin:0 0;">Properties</div>
<div class="t" style="left:1162.93px;top:722.00px;font-size:45.7px;line-height:45.7px;color:#2f62ad;transform:scaleX(0.9862);transform-origin:0 0;">Global Definitions</div>
<!-- red highlight box -->
<div class="a" style="left:24px;top:222px;width:282px;height:275px;border:14px solid #fe0000"></div>
<!-- window border overlay (clips content at right edge) -->
<div class="a" style="left:2685px;top:1px;width:3px;height:1577px;background:#1c5672"></div>
<div class="a" style="left:2688px;top:0;width:1px;height:1579px;background:#c6f1fd"></div>
<div class="a" style="left:1px;top:1575px;width:2687px;height:3px;background:#1c5672"></div>
<div class="a" style="left:0;top:1578px;width:2689px;height:1px;background:#c6f1fd"></div>
<div class="a" style="left:1px;top:1px;width:3px;height:1577px;background:#1c5672"></div>
<div class="a" style="left:0;top:0;width:1px;height:1579px;background:#c6f1fd"></div>
</body></html>
